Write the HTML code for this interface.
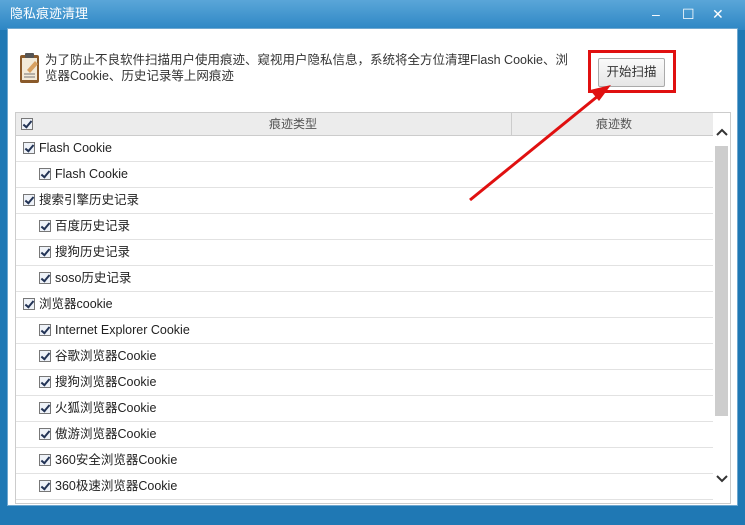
<!DOCTYPE html>
<html><head><meta charset="utf-8"><style>
*{margin:0;padding:0;box-sizing:border-box}
body{width:745px;height:525px;overflow:hidden;background:#1f78b4;font-family:"Liberation Sans","Noto Sans CJK SC",sans-serif;font-size:12px;color:#333;position:relative}
.title{position:absolute;left:0;top:0;width:745px;height:30px;background:linear-gradient(#5aa6d8,#2d86c4);}
.title span{position:absolute;left:10px;top:5px;color:#fff;font-size:13px;line-height:18px}
.ctl{position:absolute;top:5px;color:#fff;font-size:14px;line-height:18px}
.main{position:absolute;left:7px;top:28px;width:731px;height:478px;background:#fff;border:1px solid #6fa8d0}
.desc{position:absolute;left:45px;top:52px;width:535px;line-height:16px;font-size:12.5px;color:#333}
.btn{position:absolute;left:598px;top:58px;width:67px;height:29px;border:1px solid #aaa;border-radius:2px;background:linear-gradient(#fafafa,#e6e6e6);text-align:center;line-height:27px;font-size:12.5px}
.red{position:absolute;left:588px;top:50px;width:88px;height:43px;border:3px solid #e01010}
.list{position:absolute;left:15px;top:112px;width:716px;height:392px;border:1px solid #ccc;overflow:hidden}
.hdr{height:23px;background:#ececec;border-bottom:1px solid #ccc;position:relative;color:#555;line-height:22px}
.row{height:26px;border-bottom:1px solid #e2e2e2;position:relative;width:697px;line-height:25px;font-size:12.5px;color:#222}
.cb{display:inline-block;width:12px;height:12px;border:1px solid #777;background:#eef2f8;vertical-align:-2px;margin-right:4px;position:relative}
.cb:after{content:"";position:absolute;left:3px;top:0px;width:3px;height:7px;border:solid #235;border-width:0 2px 2px 0;transform:rotate(40deg)}
.sb{position:absolute;left:697px;top:0;width:17px;height:392px;background:#fff}
.thumb{position:absolute;left:2px;top:33px;width:13px;height:270px;background:#cdcdcd}
</style></head><body>
<div class="title"><span>隐私痕迹清理</span>
<div class="ctl" style="left:652px">–</div><div class="ctl" style="left:682px">☐</div><div class="ctl" style="left:712px">✕</div></div>
<div class="main"></div>
<svg style="position:absolute;left:19px;top:52px" width="22" height="32"><rect x="1" y="3" width="19" height="28" rx="2" fill="#8a5a2a"/><rect x="3" y="6" width="15" height="22" fill="#f3ead8"/><rect x="6" y="1" width="9" height="5" rx="1" fill="#555"/><path d="M5 22h11M5 25h11" stroke="#777"/><path d="M8 18l8-9 3 3-8 9z" fill="#d8a060"/></svg>
<div class="desc">为了防止不良软件扫描用户使用痕迹、窥视用户隐私信息，系统将全方位清理Flash Cookie、浏览器Cookie、历史记录等上网痕迹</div>
<div class="btn">开始扫描</div>
<div class="red"></div>
<div class="list">
<div class="hdr"><span class="cb" style="position:absolute;left:5px;top:5px"></span><span style="position:absolute;left:253px;top:0">痕迹类型</span><div style="position:absolute;left:495px;top:0;height:23px;border-left:1px solid #ccc"></div><span style="position:absolute;left:580px;top:0">痕迹数</span></div>
<div class="row" style="padding-left:7px"><span class="cb"></span>Flash Cookie</div>
<div class="row" style="padding-left:23px"><span class="cb"></span>Flash Cookie</div>
<div class="row" style="padding-left:7px"><span class="cb"></span>搜索引擎历史记录</div>
<div class="row" style="padding-left:23px"><span class="cb"></span>百度历史记录</div>
<div class="row" style="padding-left:23px"><span class="cb"></span>搜狗历史记录</div>
<div class="row" style="padding-left:23px"><span class="cb"></span>soso历史记录</div>
<div class="row" style="padding-left:7px"><span class="cb"></span>浏览器cookie</div>
<div class="row" style="padding-left:23px"><span class="cb"></span>Internet Explorer Cookie</div>
<div class="row" style="padding-left:23px"><span class="cb"></span>谷歌浏览器Cookie</div>
<div class="row" style="padding-left:23px"><span class="cb"></span>搜狗浏览器Cookie</div>
<div class="row" style="padding-left:23px"><span class="cb"></span>火狐浏览器Cookie</div>
<div class="row" style="padding-left:23px"><span class="cb"></span>傲游浏览器Cookie</div>
<div class="row" style="padding-left:23px"><span class="cb"></span>360安全浏览器Cookie</div>
<div class="row" style="padding-left:23px"><span class="cb"></span>360极速浏览器Cookie</div>
<div class="sb"><svg style="position:absolute;left:3px;top:15px" width="12" height="8"><path d="M1 7l5-5 5 5" stroke="#333" stroke-width="2" fill="none"/></svg><div class="thumb"></div><svg style="position:absolute;left:3px;top:362px" width="12" height="8"><path d="M1 1l5 5 5-5" stroke="#333" stroke-width="2" fill="none"/></svg></div>
</div>
<svg style="position:absolute;left:0;top:0" width="745" height="525"><line x1="470" y1="200" x2="598" y2="96" stroke="#e01010" stroke-width="3"/><path d="M611 85l-21 5 9 11z" fill="#e01010"/></svg>
</body></html>
